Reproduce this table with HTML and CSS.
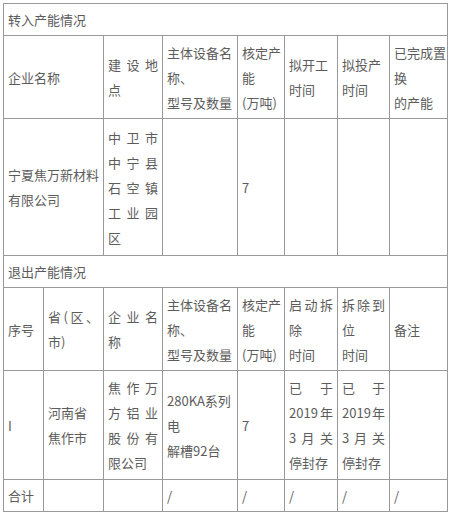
FILE: index.html
```html
<!DOCTYPE html>
<html lang="zh">
<head>
<meta charset="utf-8">
<title>产能置换</title>
<link rel="stylesheet" href="styles.css">
</head>
<body>
<table class="cap">
  <colgroup>
    <col class="w1"><col class="w2"><col class="w3"><col class="w4"><col class="w5"><col class="w6"><col class="w7"><col class="w8">
  </colgroup>
  <tbody>
    <tr class="r-title"><td colspan="8">转入产能情况</td></tr>
    <tr class="r-head">
      <td colspan="2">企业名称</td>
      <td><span class="j">建设地</span>点</td>
      <td>主体设备名<br>称、<br>型号及数量</td>
      <td><span class="j">核定产</span>能<br>(万吨)</td>
      <td>拟开工<br>时间</td>
      <td>拟投产<br>时间</td>
      <td>已完成置<br>换<br>的产能</td>
    </tr>
    <tr class="r-data1">
      <td colspan="2">宁夏焦万新材料<br>有限公司</td>
      <td><span class="j">中卫市</span><span class="j">中宁县</span><span class="j">石空镇</span><span class="j">工业园</span>区</td>
      <td></td>
      <td>7</td>
      <td></td>
      <td></td>
      <td></td>
    </tr>
    <tr class="r-title"><td colspan="8">退出产能情况</td></tr>
    <tr class="r-head">
      <td>序号</td>
      <td><span class="j">省(区、</span>市)</td>
      <td><span class="j">企业名</span>称</td>
      <td>主体设备名<br>称、<br>型号及数量</td>
      <td><span class="j">核定产</span>能<br>(万吨)</td>
      <td><span class="j">启动拆</span>除<br>时间</td>
      <td><span class="j">拆除到</span>位<br>时间</td>
      <td>备注</td>
    </tr>
    <tr class="r-data2">
      <td>I</td>
      <td>河南省<br>焦作市</td>
      <td><span class="j">焦作万</span><span class="j">方铝业</span><span class="j">股份有</span>限公司</td>
      <td>280KA系列<br>电<br>解槽92台</td>
      <td>7</td>
      <td><span class="j">已于</span><span class="j">2019年</span><span class="j">3月关</span>停封存</td>
      <td><span class="j">已于</span><span class="j">2019年</span><span class="j">3月关</span>停封存</td>
      <td></td>
    </tr>
    <tr class="r-total">
      <td>合计</td>
      <td></td>
      <td></td>
      <td>/</td>
      <td>/</td>
      <td>/</td>
      <td>/</td>
      <td>/</td>
    </tr>
  </tbody>
</table>
</body>
</html>
```

FILE: styles.css
```css
body {
  margin: 0;
  background: #ffffff;
}

.cap {
  border-collapse: collapse;
  table-layout: fixed;
  width: 445px;
  margin: 3px 0 0 3px;
  font-family: "Noto Sans CJK SC", "Noto Sans", sans-serif;
  font-size: 13px;
  line-height: 25px;
  color: #5c5c5c;
}

.w1 { width: 40px; }
.w2 { width: 60px; }
.w3 { width: 59px; }
.w4 { width: 75px; }
.w5 { width: 47px; }
.w6 { width: 53px; }
.w7 { width: 52px; }
.w8 { width: 58px; }

.cap td {
  border: 1px solid #999999;
  padding: 0 4px;
  vertical-align: middle;
  text-align: left;
  white-space: nowrap;
}

.r-title td,
.r-total td {
  height: 31px;
}

.r-head td {
  height: 82px;
}

.r-data1 td {
  height: 136px;
}

.r-data2 td {
  height: 108px;
}

.j {
  display: block;
  text-align: justify;
  text-align-last: justify;
}
```
